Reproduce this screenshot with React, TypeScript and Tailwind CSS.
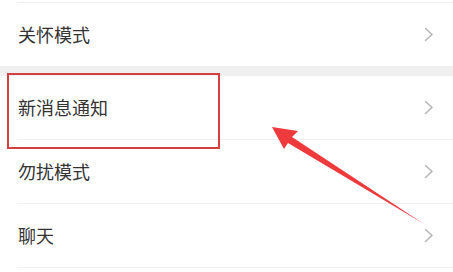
const Chevron = () => (
    <svg width="10" height="15" viewBox="0 0 10 15" fill="none">
        <path d="M1.5 1.5 L8 7.5 L1.5 13.5" stroke="#b5b5b5" strokeWidth="1.5" strokeLinecap="round" strokeLinejoin="round" />
    </svg>
)

const Row = ({ label, last = false }: { label: string; last?: boolean }) => (
    <div className="bg-white">
        <div className="flex items-center justify-between h-[63px] pl-[18px] pr-[19px]">
            <span className="text-[18px] text-[#333333] leading-none -mt-[2px]">{label}</span>
            <Chevron />
        </div>
        {!last && <div className="ml-[17px] h-px bg-[#efefef]" />}
    </div>
)

export default function App() {
    return (
        <div
            className="relative w-[453px] h-[272px] overflow-hidden bg-white"
            style={{ fontFamily: '"Noto Sans CJK SC", "Noto Sans", sans-serif' }}
        >
            <div className="h-[2px] bg-white" />
            <div className="ml-[17px] h-px bg-[#efefef]" />
            <Row label="关怀模式" last />
            <div className="h-[10px] bg-[#f0f0f0]" />
            <Row label="新消息通知" />
            <Row label="勿扰模式" />
            <Row label="聊天" />

            {/* annotation box */}
            <div className="absolute left-[7px] top-[73px] w-[213px] h-[76px] border-2 border-[#d4403f]" />

            {/* annotation arrow */}
            <svg className="absolute inset-0" width="453" height="272" viewBox="0 0 453 272">
                <polygon
                    points="272,127 298,131 292,137 424,224 288,143 284,149"
                    fill="#ee3a3c"
                />
            </svg>
        </div>
    )
}
